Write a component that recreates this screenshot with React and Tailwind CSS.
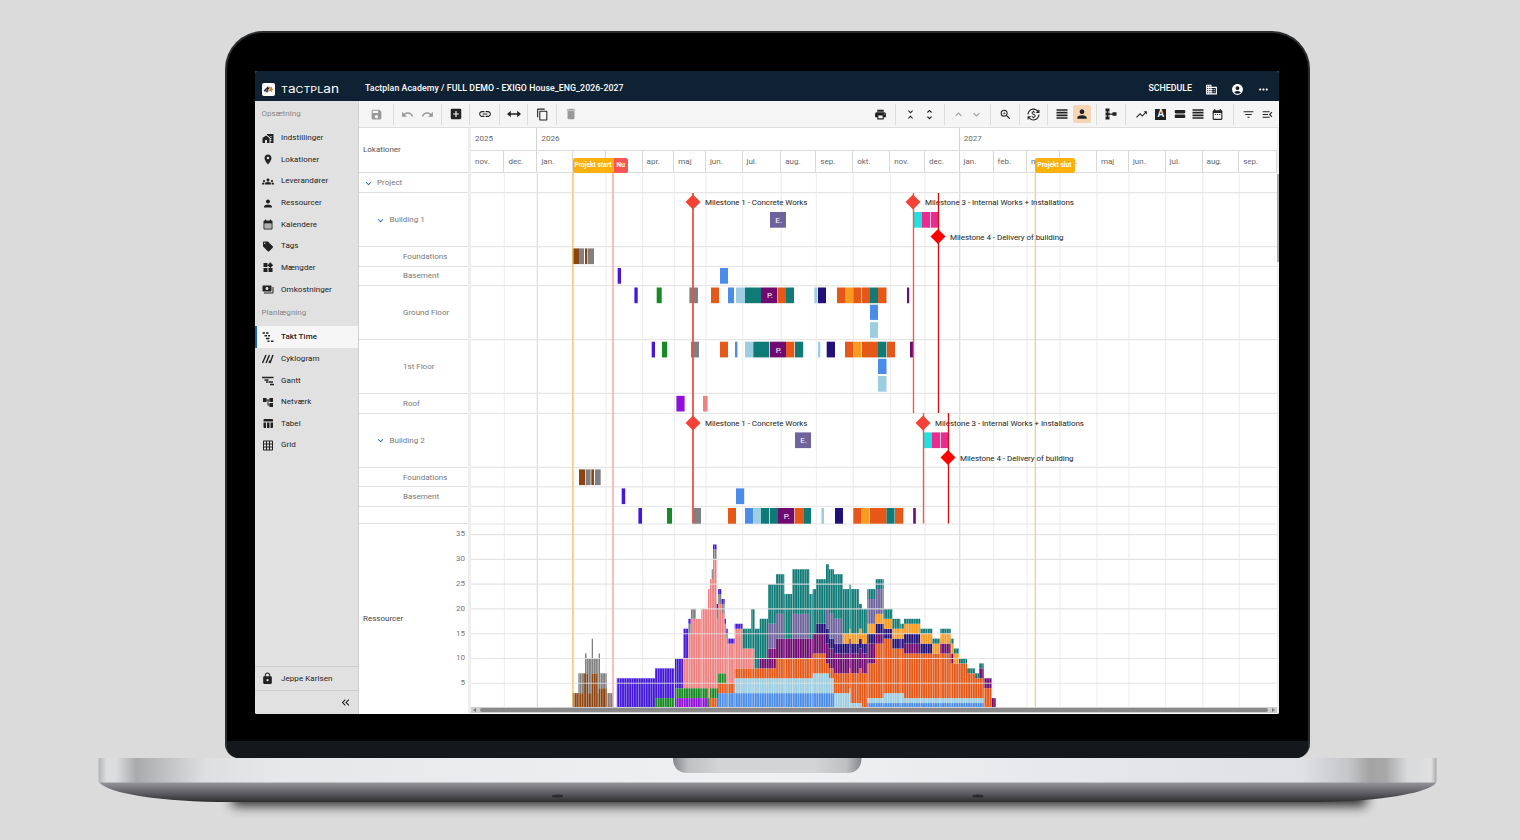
import React from 'react';
import {
  MdSave, MdUndo, MdRedo, MdAddBox, MdLink, MdContentCopy, MdDelete, MdPrint,
  MdUnfoldLess, MdUnfoldMore, MdKeyboardArrowUp, MdKeyboardArrowDown, MdZoomIn,
  MdCurrencyExchange, MdPerson, MdTrendingUp, MdViewStream, MdDateRange,
  MdFilterList, MdMenuOpen, MdHomeWork, MdLocationOn, MdGroups, MdCalendarMonth,
  MdLocalOffer, MdWidgets, MdPayments, MdAccountTree, MdTableChart, MdGridOn,
  MdLock, MdKeyboardDoubleArrowLeft, MdDomain, MdAccountCircle, MdMoreHoriz,
} from 'react-icons/md';

const C = {
  brown: '#8b4513',
  gray: '#808080',
  indigo: '#4318d8',
  green: '#178a25',
  violet: '#8f10dc',
  salmon: '#ee8080',
  blue: '#4a8ce8',
  light: '#9ccde0',
  orange: '#e55817',
  teal: '#107a76',
  purple: '#6e0a70',
  slate: '#6f639b',
  navy: '#201078',
  amber: '#f99a22',
  cyan: '#22dfe0',
  pink: '#e92d90',
};

// Custom icons
function Icon({ size = 12, children }) {
  return (
    <svg width={size} height={size} viewBox="0 0 24 24" fill="none" stroke="currentColor" strokeWidth="2.4">
      {children}
    </svg>
  );
}
const TaktIcon = () => <Icon><path d="M1 4h5M8 4h5M5 9.500h5M12 9.500h4M8 15h7M11 20.500h4M18 20.500h5" strokeWidth="2.800" /></Icon>;
const CyklogramIcon = () => <Icon><path d="M1 20L8 4M8 20l7-16M14 20l2-5M16 20l6-16" strokeWidth="2.800" /></Icon>;
const GanttIcon = () => <Icon><path d="M0 5h23M5 10h8M8 14h4M13 14h9M16 19h8" strokeWidth="2.600" /></Icon>;
const WidthIcon = () => (
  <Icon size={14}>
    <path d="M3 12h18" strokeWidth="2.400" />
    <path d="M6.500 6.500v11L0 12zM17.500 6.500v11L24 12z" fill="currentColor" stroke="none" />
  </Icon>
);
const RowsIcon = () => <Icon><path d="M1 4h22M1 9.300h22M1 14.700h22M1 20h22" strokeWidth="3.200" /></Icon>;
const TreeIcon = () => (
  <Icon>
    <path d="M5 4v16M5 12h14" strokeWidth="2.500" />
    <path d="M1 1h8v6H1zM1 9h8v6H1zM1 17h8v6H1zM15 8.500h8v7h-8z" fill="currentColor" stroke="none" />
  </Icon>
);
const LetterIcon = () => (
  <span className="flex size-[11px] items-center justify-center bg-[#222] text-[10px] leading-none font-medium text-white">A</span>
);

const setupItems = [
  { label: 'Indstillinger', icon: MdHomeWork },
  { label: 'Lokationer', icon: MdLocationOn },
  { label: 'Leverandører', icon: MdGroups },
  { label: 'Ressourcer', icon: MdPerson },
  { label: 'Kalendere', icon: MdCalendarMonth },
  { label: 'Tags', icon: MdLocalOffer },
  { label: 'Mængder', icon: MdWidgets },
  { label: 'Omkostninger', icon: MdPayments },
];

const planItems = [
  { label: 'Takt Time', icon: TaktIcon, active: true },
  { label: 'Cyklogram', icon: CyklogramIcon },
  { label: 'Gantt', icon: GanttIcon },
  { label: 'Netværk', icon: MdAccountTree },
  { label: 'Tabel', icon: MdTableChart },
  { label: 'Grid', icon: MdGridOn },
];

// Location rows with the y where each one ends
const rows = [
  { label: 'Project', level: 0, end: 192.7 },
  { label: 'Building 1', level: 1, end: 246.7 },
  { label: 'Foundations', level: 2, end: 266.3 },
  { label: 'Basement', level: 2, end: 285.7 },
  { label: 'Ground Floor', level: 2, end: 339.7 },
  { label: '1st Floor', level: 2, end: 393.4 },
  { label: 'Roof', level: 2, end: 413.4 },
  { label: 'Building 2', level: 1, end: 467.4 },
  { label: 'Foundations', level: 2, end: 486.8 },
  { label: 'Basement', level: 2, end: 506.3 },
  { label: '', level: 2, end: 524 },
];

const months = [
  ['nov.', 471], ['dec.', 504.4], ['jan.', 537.4], ['feb.', 572.7], ['mar.', 606], ['apr.', 642.6],
  ['maj', 674.3], ['jun.', 706], ['jul.', 742.6], ['aug.', 781.3], ['sep.', 816.4], ['okt.', 853.3],
  ['nov.', 890.3], ['dec.', 925], ['jan.', 959.7], ['feb.', 993.7], ['mar.', 1027], ['apr.', 1060],
  ['maj', 1097], ['jun.', 1129], ['jul.', 1165.7], ['aug.', 1202.7], ['sep.', 1239.3],
];

// [color, x1, x2, y, label]
const bars = [
  ['slate', 770, 786, 212, 'E.'],
  ['cyan', 914, 921.7, 212], ['pink', 921.7, 930, 212], ['pink', 930.7, 938.7, 212],
  ['brown', 572.7, 579.7, 248.4], ['gray', 579.7, 584, 248.4], ['brown', 585, 587.3, 248.4], ['gray', 587.9, 594, 248.4],
  ['indigo', 617.7, 621, 268], ['blue', 720, 728, 268],
  ['indigo', 634.4, 637.7, 287.5], ['green', 656.7, 661.7, 287.5], ['gray', 689.4, 698, 287.5],
  ['orange', 711, 719, 287.5], ['blue', 728, 734, 287.5], ['light', 736, 745, 287.5], ['teal', 745, 761, 287.5],
  ['purple', 761, 777.3, 287.5, 'P.'], ['orange', 777.8, 786, 287.5], ['teal', 786, 794, 287.5],
  ['light', 814.4, 817.4, 287.5], ['navy', 818, 826, 287.5], ['orange', 837, 845, 287.5], ['amber', 845, 853.3, 287.5],
  ['orange', 853.3, 861.3, 287.5], ['orange', 862, 870, 287.5], ['teal', 870, 878, 287.5], ['orange', 878, 886.5, 287.5],
  ['purple', 907, 909.2, 287.5], ['blue', 870, 878, 304.7], ['light', 870, 878, 322.2],
  ['indigo', 651.7, 655, 341.7], ['green', 662, 667.2, 341.7], ['gray', 691, 699, 341.7], ['orange', 720, 728, 341.7],
  ['blue', 735, 737.4, 341.7], ['light', 745, 753.3, 341.7], ['teal', 753.3, 769.3, 341.7], ['purple', 770, 786, 341.7, 'P.'],
  ['orange', 786, 794.3, 341.7], ['teal', 795, 803.2, 341.7], ['light', 818, 820.3, 341.7], ['navy', 826.7, 835, 341.7],
  ['orange', 845, 853.3, 341.7], ['amber', 853.3, 861.3, 341.7], ['orange', 862, 878, 341.7], ['teal', 878, 886.3, 341.7],
  ['orange', 886.8, 895, 341.7], ['purple', 910, 913, 341.7], ['blue', 878, 886.5, 358.8], ['light', 878, 886.5, 376],
  ['violet', 676.4, 684.6, 395.8], ['salmon', 703, 707.6, 395.8],
  ['slate', 795, 811, 432.4, 'E.'],
  ['cyan', 924, 932, 432.4], ['pink', 932, 940, 432.4], ['pink', 940.7, 948.4, 432.4],
  ['brown', 579, 585.3, 469.4], ['gray', 586, 590.6, 469.4], ['brown', 591.3, 594, 469.4], ['gray', 595, 600.7, 469.4],
  ['indigo', 621.7, 625.2, 488.4], ['blue', 736, 744.2, 488.4],
  ['indigo', 638.4, 642, 508], ['green', 667, 672, 508], ['gray', 692.8, 701, 508], ['orange', 728, 736, 508],
  ['blue', 745, 753.3, 508], ['light', 753.3, 761, 508], ['teal', 761, 769.3, 508], ['teal', 770, 778, 508],
  ['purple', 778, 794.2, 508, 'P.'], ['orange', 794.7, 803.3, 508], ['teal', 803.3, 811, 508], ['light', 821.4, 824, 508],
  ['navy', 835, 843, 508], ['orange', 853.3, 861, 508], ['amber', 861, 869.4, 508], ['orange', 870, 886.5, 508],
  ['teal', 886.5, 894.6, 508], ['orange', 895, 903.2, 508], ['purple', 913.2, 915.8, 508],
];

const milestones = [
  { x: 693, y: 202, color: '#f44336', label: 'Milestone 1 - Concrete Works', len: 102.5 },
  { x: 913, y: 202, color: '#f44336', label: 'Milestone 3 - Internal Works + Installations', len: 149 },
  { x: 938, y: 236.5, color: '#ff0000', label: 'Milestone 4 - Delivery of building', len: 113.5 },
  { x: 693, y: 423, color: '#f44336', label: 'Milestone 1 - Concrete Works', len: 102.5 },
  { x: 923, y: 423, color: '#f44336', label: 'Milestone 3 - Internal Works + Installations', len: 149 },
  { x: 948, y: 457.5, color: '#ff0000', label: 'Milestone 4 - Delivery of building', len: 113.5 },
];

// Resource stacks: [x1, x2, [color, cumulative top], ...]
const stacks = [
  [572.7, 578.3, ['brown', 3]],
  [578.3, 583.3, ['brown', 3], ['gray', 7]],
  [583.3, 585, ['brown', 7]],
  [585, 586.7, ['brown', 7], ['gray', 11]],
  [586.7, 588, ['brown', 7], ['gray', 10]],
  [588, 591.7, ['brown', 3], ['gray', 10]],
  [591.7, 593, ['brown', 7], ['gray', 14]],
  [593, 597.7, ['brown', 7], ['gray', 10]],
  [597.7, 598.7, ['brown', 3], ['gray', 10]],
  [598.7, 600, ['brown', 4], ['gray', 11]],
  [600, 606.7, ['brown', 4], ['gray', 7]],
  [607.3, 613, ['gray', 3]],
  [616.8, 655, ['indigo', 6]],
  [655, 674.3, ['green', 2], ['indigo', 8]],
  [675, 683.4, ['violet', 2], ['green', 4], ['indigo', 10]],
  [683.4, 688.3, ['violet', 2], ['green', 4], ['salmon', 10], ['indigo', 16]],
  [688.3, 691, ['violet', 2], ['green', 4], ['salmon', 15], ['gray', 17], ['indigo', 18]],
  [691, 696, ['violet', 2], ['green', 4], ['salmon', 18], ['gray', 20]],
  [696, 701.3, ['violet', 2], ['green', 4], ['salmon', 18]],
  [701.3, 708, ['violet', 2], ['green', 4], ['salmon', 20]],
  [708, 710, ['green', 2], ['salmon', 24]],
  [710, 711.7, ['orange', 2], ['green', 4], ['salmon', 26]],
  [711.7, 713, ['orange', 2], ['green', 4], ['salmon', 26], ['gray', 28]],
  [713, 716.6, ['orange', 2], ['green', 4], ['salmon', 30], ['gray', 32], ['indigo', 33]],
  [716.6, 718, ['orange', 2], ['green', 4], ['salmon', 18], ['gray', 20], ['indigo', 21]],
  [718, 721.3, ['blue', 3], ['orange', 5], ['green', 7], ['salmon', 21], ['gray', 23], ['indigo', 24]],
  [721.3, 724.7, ['blue', 3], ['orange', 5], ['green', 7], ['salmon', 19], ['gray', 21], ['indigo', 22]],
  [724.7, 726, ['blue', 3], ['orange', 5], ['green', 7], ['salmon', 17], ['indigo', 18]],
  [726, 727.7, ['blue', 3], ['orange', 5], ['salmon', 14], ['gray', 15], ['indigo', 16]],
  [727.7, 734.7, ['blue', 3], ['orange', 5], ['salmon', 13], ['indigo', 14]],
  [734.7, 742.7, ['blue', 3], ['light', 6], ['orange', 8], ['salmon', 16], ['indigo', 17]],
  [742.7, 751.3, ['blue', 3], ['light', 6], ['orange', 8], ['salmon', 12], ['teal', 16]],
  [751.3, 754.7, ['blue', 3], ['light', 6], ['orange', 8], ['salmon', 12], ['teal', 20]],
  [754.7, 759.7, ['blue', 3], ['light', 6], ['orange', 8], ['teal', 16]],
  [759.7, 768, ['blue', 3], ['light', 6], ['orange', 8], ['purple', 10], ['teal', 18]],
  [768, 776, ['blue', 3], ['light', 6], ['orange', 8], ['purple', 12], ['slate', 17], ['teal', 25]],
  [776, 784.3, ['blue', 3], ['light', 6], ['orange', 10], ['purple', 14], ['slate', 19], ['teal', 27]],
  [784.3, 792.3, ['blue', 3], ['light', 6], ['orange', 10], ['purple', 14], ['teal', 23]],
  [792.3, 809.3, ['blue', 3], ['light', 6], ['orange', 10], ['purple', 14], ['slate', 19], ['teal', 28]],
  [809.3, 812.7, ['blue', 3], ['light', 6], ['orange', 10], ['purple', 14], ['teal', 23]],
  [812.7, 816, ['blue', 3], ['light', 7], ['orange', 11], ['purple', 15], ['teal', 24]],
  [816, 826, ['blue', 3], ['light', 7], ['orange', 11], ['purple', 15], ['navy', 17], ['teal', 26]],
  [826, 829, ['blue', 3], ['light', 7], ['orange', 9], ['purple', 13], ['navy', 16], ['slate', 20], ['teal', 29]],
  [829, 834, ['blue', 3], ['light', 6], ['orange', 8], ['purple', 12], ['navy', 14], ['slate', 19], ['teal', 28]],
  [834, 842.7, ['light', 3], ['orange', 7], ['purple', 11], ['navy', 13], ['slate', 18], ['teal', 27]],
  [842.7, 849.3, ['light', 3], ['orange', 7], ['purple', 11], ['navy', 13], ['amber', 15], ['teal', 24]],
  [849.3, 850.7, ['light', 4], ['orange', 8], ['purple', 12], ['navy', 14], ['amber', 16], ['teal', 25]],
  [850.7, 859, ['light', 1], ['orange', 7], ['purple', 11], ['navy', 13], ['amber', 15], ['teal', 24]],
  [859, 862, ['light', 1], ['orange', 8], ['purple', 12], ['navy', 14], ['amber', 16], ['teal', 21]],
  [862, 867.3, ['orange', 7], ['purple', 11], ['navy', 13], ['amber', 15], ['teal', 20]],
  [867.3, 875.7, ['blue', 1], ['light', 2], ['orange', 9], ['purple', 13], ['navy', 15], ['amber', 17], ['slate', 22], ['teal', 24]],
  [875.7, 883.7, ['blue', 1], ['light', 2], ['orange', 13], ['purple', 15], ['navy', 17], ['amber', 19], ['slate', 24], ['teal', 26]],
  [883.7, 892.3, ['blue', 1], ['light', 3], ['orange', 14], ['navy', 16], ['amber', 18], ['teal', 20]],
  [892.3, 900.3, ['blue', 1], ['light', 3], ['orange', 12], ['navy', 14], ['amber', 16], ['teal', 18]],
  [900.3, 904, ['blue', 1], ['light', 3], ['orange', 12], ['navy', 14], ['amber', 16], ['teal', 17]],
  [904, 920.3, ['blue', 1], ['light', 2], ['orange', 11], ['purple', 13], ['navy', 15], ['amber', 17], ['teal', 18]],
  [920.3, 932.3, ['blue', 1], ['light', 2], ['orange', 11], ['navy', 13], ['amber', 15], ['teal', 16]],
  [932.3, 940.3, ['blue', 1], ['light', 2], ['orange', 11], ['amber', 13], ['teal', 14]],
  [940.3, 950.7, ['blue', 1], ['light', 2], ['orange', 11], ['purple', 13], ['amber', 15], ['teal', 16]],
  [950.7, 953.7, ['blue', 1], ['light', 2], ['orange', 9], ['purple', 11], ['amber', 13], ['teal', 14]],
  [953.7, 959, ['blue', 1], ['light', 2], ['orange', 9], ['amber', 11], ['teal', 12]],
  [959, 967, ['blue', 1], ['light', 2], ['orange', 9], ['teal', 10]],
  [967, 975, ['blue', 1], ['light', 2], ['orange', 7], ['teal', 8]],
  [975, 979, ['blue', 1], ['light', 2], ['orange', 6], ['teal', 7]],
  [979, 983.7, ['blue', 1], ['light', 2], ['orange', 6], ['purple', 8], ['teal', 9]],
  [983.7, 991.7, ['orange', 4], ['purple', 6]],
  [991.7, 995.7, ['purple', 2]],
];

const ticks = [35, 30, 25, 20, 15, 10, 5];
const yOf = (v) => 708 - v * 4.955;

function Toolbar() {
  return (
    <div className="flex h-[27px] shrink-0 items-center justify-between border-b border-[#dedede] bg-[#f6f5f6] text-[13px] text-[#222]">
      <div className="flex">
        <Group width="w-[35px]" muted><MdSave size={13} /></Group>
        <Group width="w-[48px]" muted><Slot><MdUndo size={13} /></Slot><Slot><MdRedo size={13} /></Slot></Group>
        <Group width="w-[28px]"><MdAddBox size={14} /></Group>
        <Group width="w-[30px]"><MdLink size={14} /></Group>
        <Group width="w-[28px]"><WidthIcon /></Group>
        <Group width="w-[29px]"><MdContentCopy size={13} /></Group>
        <Group width="w-[28px]" muted last><MdDelete size={14} /></Group>
      </div>
      <div className="flex">
        <Group width="w-[30px]"><MdPrint size={13} /></Group>
        <Group width="w-[49px]"><Slot><MdUnfoldLess /></Slot><Slot><MdUnfoldMore /></Slot></Group>
        <Group width="w-[46px]" muted><Slot small><MdKeyboardArrowUp /></Slot><Slot small><MdKeyboardArrowDown /></Slot></Group>
        <Group width="w-[29px]"><MdZoomIn size={13} /></Group>
        <Group width="w-[28px]"><MdCurrencyExchange size={13} /></Group>
        <Group width="w-[49px]">
          <Slot><RowsIcon /></Slot>
          <Slot><span className="flex size-[18px] shrink-0 items-center justify-center rounded-xs bg-[#f6d5b5]"><MdPerson size={14} /></span></Slot>
        </Group>
        <Group width="w-[29px]"><TreeIcon /></Group>
        <Group width="w-[108px]">
          <Slot><MdTrendingUp size={13} /></Slot>
          <Slot><LetterIcon /></Slot>
          <Slot small><MdViewStream size={14} /></Slot>
          <Slot><RowsIcon /></Slot>
          <Slot><MdDateRange size={13} /></Slot>
        </Group>
        <Group width="w-[45px] pl-[3px]" last><Slot><MdFilterList size={13} /></Slot><Slot><MdMenuOpen size={13} /></Slot></Group>
      </div>
    </div>
  );
}

function Group({ width, muted, last, children }) {
  return (
    <div className={`flex h-[21px] items-center justify-center ${width} ${muted ? 'text-[#999]' : ''} ${last ? '' : 'border-r border-[#dcdcdc]'}`}>
      {children}
    </div>
  );
}

function Slot({ small, children }) {
  return <div className={`flex shrink-0 items-center justify-center ${small ? 'w-[18px]' : 'w-[19.5px]'}`}>{children}</div>;
}

function NavItem({ item }) {
  const ItemIcon = item.icon;
  return (
    <div className={`flex h-[21.65px] items-center border-l-2 pl-[5px] ${item.active ? 'border-[#1565c0] bg-[#f6f6f6] font-medium' : 'border-transparent'}`}>
      <span className="flex w-[12px] justify-center"><ItemIcon size={13} /></span>
      <span className="ml-[7px]">{item.label}</span>
    </div>
  );
}

function Sidebar() {
  return (
    <div className="flex w-[104px] shrink-0 flex-col border-r border-[#cfcfcf] bg-[#e1e1e1] text-[8px] tracking-[0.06px] text-[#222]">
      <div className="flex h-[26.3px] items-center pl-[6.5px] text-[#888]">Opsætning</div>
      {setupItems.map((item) => <NavItem key={item.label} item={item} />)}
      <div className="flex h-[26px] items-center pl-[6.5px] text-[#888]">Planlægning</div>
      {planItems.map((item) => <NavItem key={item.label} item={item} />)}
      <div className="mt-auto flex h-[24px] items-center border-t border-[#cfcfcf] pl-[6px]">
        <MdLock size={13} />
        <span className="ml-[7px]">Jeppe Karlsen</span>
      </div>
      <div className="flex h-[24px] items-center justify-end border-t border-[#cfcfcf] pr-[6px]">
        <MdKeyboardDoubleArrowLeft size={13} />
      </div>
    </div>
  );
}

function LocationColumn() {
  return (
    <div className="flex w-[109px] shrink-0 flex-col bg-white text-[#777]">
      <div className="flex h-[45px] shrink-0 items-center border-b border-[#dcdcdc] pl-[4px] text-[#555]">Lokationer</div>
      {rows.map((row, i) => {
        const start = i === 0 ? 172.5 : rows[i - 1].end;
        return (
          <div
            key={i}
            className={`flex shrink-0 items-center border-b border-[#e0e0e0] pt-px ${['pl-[3.5px]', 'pl-[16px]', 'pl-[44px]'][row.level]}`}
            style={{ height: row.end - start }}
          >
            {row.level < 2 && <MdKeyboardArrowDown size={11} className="mr-[3.5px] text-[#1565c0]" />}
            {row.label}
          </div>
        );
      })}
      <div className="flex flex-1 items-center justify-between pl-[4px] text-[#444]">
        <span>Ressourcer</span>
        <div className="flex flex-col self-start pt-[5px] pr-[3px] text-right text-[#777]">
          {ticks.map((t) => <span key={t} className="h-[24.8px] leading-[10px]">{t}</span>)}
        </div>
      </div>
    </div>
  );
}

function TimelineHeader() {
  return (
    <div className="relative h-[45px] shrink-0 border-b border-[#dcdcdc] text-[#666]">
      <div className="flex h-[23px] items-center border-b border-[#dcdcdc]">
        <div className="flex h-full w-[66.4px] items-center border-r border-[#d4d4d4] pl-[4px]">2025</div>
        <div className="flex h-full w-[422.3px] items-center border-r border-[#d4d4d4] pl-[4px]">2026</div>
        <div className="pl-[4px]">2027</div>
      </div>
      <div className="flex h-[21px]">
        {months.map(([name, x], i) => (
          <div
            key={x}
            className="flex shrink-0 items-center border-r border-[#d8d8d8] pt-px pl-[4px]"
            style={{ width: (i < months.length - 1 ? months[i + 1][1] : 1276.7) - x }}
          >
            {name}
          </div>
        ))}
      </div>
      <div className="absolute top-[30px] left-[101.5px] flex h-[15px] text-[6.6px] font-bold tracking-normal text-white">
        <span className="flex w-[41px] items-center justify-center rounded-l-xs bg-[#fbb00c]">Projekt start</span>
        <span className="flex w-[14.5px] items-center justify-center rounded-r-xs bg-[#fa5555]">Nu</span>
      </div>
      <div className="absolute top-[30px] left-[563.5px] flex h-[15px] w-[40px] items-center justify-center rounded-xs bg-[#fbb00c] text-[6.6px] font-bold tracking-normal text-white">
        Projekt slut
      </div>
    </div>
  );
}

function Timeline() {
  return (
    <svg width="806" height="534" viewBox="471 173 806 534" className="block shrink-0" fontSize="8">
      <defs>
        <pattern id="days" x="572.5" y="0" width="2.37" height="10" patternUnits="userSpaceOnUse">
          <rect x="1.85" width="0.52" height="10" fill="#fff" opacity="0.65" />
        </pattern>
      </defs>

      {months.slice(1).map(([name, x]) => (
        <line key={x} x1={x} x2={x} y1="173" y2="707" stroke={name === 'jan.' ? '#dddddd' : '#f0f0f0'} strokeWidth="1.3" />
      ))}
      {rows.map((row) => (
        <line key={row.end} x1="471" x2="1277" y1={row.end} y2={row.end} stroke="#e6e6e6" strokeWidth="1.2" />
      ))}

      {/* Resource histogram */}
      {stacks.map(([x1, x2, ...parts]) => (
        <g key={x1}>
          {parts.map(([color, top], i) => {
            const base = i === 0 ? 0 : parts[i - 1][1];
            return <rect key={i} x={x1} y={yOf(top)} width={x2 - x1} height={(top - base) * 4.955} fill={C[color]} />;
          })}
          <rect x={x1} y={yOf(parts[parts.length - 1][1])} width={x2 - x1} height="170" fill="url(#days)" />
        </g>
      ))}
      {ticks.map((t) => (
        <line key={t} x1="471" x2="1277" y1={yOf(t)} y2={yOf(t)} stroke="#e0e0e0" strokeWidth="1.1" opacity="0.85" />
      ))}

      {/* Takt bars */}
      {bars.map(([color, x1, x2, y, label]) => (
        <g key={`${x1}-${y}`}>
          <rect x={x1} y={y} width={x2 - x1} height={y === 304.7 || y === 358.8 ? 15.2 : 15.7} fill={C[color]} />
          {label && <text x={(x1 + x2) / 2 + 0.7} y={y + 10.8} fill="#fff" textAnchor="middle">{label}</text>}
        </g>
      ))}

      {/* Project start, now and project end */}
      <line x1="573" x2="573" y1="173" y2="707" stroke="#f5bf45" strokeWidth="1.2" />
      <line x1="613" x2="613" y1="173" y2="707" stroke="#f59a9a" strokeWidth="1.3" />
      <line x1="1035.300" x2="1035.300" y1="173" y2="707" stroke="#f2cf75" strokeWidth="1.2" />

      {milestones.map((m) => (
        <text key={`t${m.x}-${m.y}`} x={m.x + 12} y={m.y + 3.4} textLength={m.len} fill="#222">{m.label}</text>
      ))}
      <g strokeWidth="1.4">
        <line x1="693" x2="693" y1="193" y2="523.500" stroke="#e8534a" strokeWidth="1.800" />
        <line x1="913.500" x2="913.500" y1="193" y2="413" stroke="#ee5a50" />
        <line x1="938.500" x2="938.500" y1="193" y2="413" stroke="#cc1414" />
        <line x1="923.500" x2="923.500" y1="413" y2="523.500" stroke="#ee5a50" />
        <line x1="948.500" x2="948.500" y1="413" y2="523.500" stroke="#cc1414" />
      </g>
      {milestones.map((m) => (
        <path key={`d${m.x}-${m.y}`} d={`M${m.x} ${m.y - 7.5}l7.500 7.500-7.500 7.500-7.500-7.500z`} fill={m.color} />
      ))}
    </svg>
  );
}

function Screen() {
  return (
    <div className="flex h-[643px] w-[1024px] flex-col overflow-hidden rounded-xs bg-white text-[8px]">
      <header className="flex h-[30px] shrink-0 items-center bg-[#0f2233] pt-[6px] pr-[9px] pl-[7px] text-white">
        <svg width="13" height="13" viewBox="0 0 26 26">
          <rect width="26" height="26" rx="4" fill="#fff" />
          <path d="M4 16l7-7-1 10M4 16h9M15 8l-3 5" stroke="#1d2b3a" strokeWidth="2.400" fill="none" />
          <path d="M14 7l3 2 3-2 0 4 3 2-3 2 0 4-3-3-4 1 2-4z" fill="#e8872a" />
        </svg>
        <svg width="60" height="13" viewBox="0 0 60 13" className="ml-[5px]" fill="#fff" fontFamily="Inter" fontSize="9">
          <text x="1" y="9.7" textLength="58" lengthAdjust="spacingAndGlyphs">
            T<tspan fontSize="11.500">a</tspan>CTPL<tspan fontSize="11.500">an</tspan>
          </text>
        </svg>
        <span className="ml-[25px] text-[8.75px] font-medium tracking-[0.08px]">Tactplan Academy / FULL DEMO - EXIGO House_ENG_2026-2027</span>
        <span className="ml-auto text-[8.8px] font-medium">SCHEDULE</span>
        <MdDomain size={13} className="ml-[13px]" />
        <MdAccountCircle size={13} className="ml-[13px]" />
        <MdMoreHoriz size={13} className="ml-[13px]" />
      </header>
      <div className="flex min-h-0 flex-1">
        <Sidebar />
        <div className="flex min-w-0 flex-1 flex-col">
          <Toolbar />
          <div className="flex min-h-0 flex-1">
            <LocationColumn />
            <div className="w-[3px] shrink-0 bg-[#eeeeee]" />
            <div className="flex w-[806px] shrink-0 flex-col">
              <TimelineHeader />
              <Timeline />
              <div className="flex h-[6px] items-center bg-[#cfcfcf] px-[2px]">
                <span className="size-0 border-y-2 border-r-3 border-y-transparent border-r-[#777]" />
                <span className="mx-[4px] h-[4px] flex-1 rounded-full bg-[#888]" />
                <span className="size-0 border-y-2 border-l-3 border-y-transparent border-l-[#777]" />
              </div>
            </div>
            <div className="w-[3px] shrink-0 bg-[#ededed] pt-[46px]">
              <div className="h-[88px] bg-[#aaa]" />
            </div>
          </div>
        </div>
      </div>
    </div>
  );
}

function LaptopBase() {
  return (
    <svg width="1520" height="82" viewBox="0 758 1520 82" className="block">
      <defs>
        <linearGradient id="deck">
          <stop offset="0" stopColor="#b4b5b8" />
          <stop offset="0.006" stopColor="#dcdddf" />
          <stop offset="0.013" stopColor="#dcdddf" />
          <stop offset="0.028" stopColor="#a9aaac" />
          <stop offset="0.046" stopColor="#bcbdbf" />
          <stop offset="0.08" stopColor="#dedfe1" />
          <stop offset="0.13" stopColor="#e6e7e9" />
          <stop offset="0.5" stopColor="#eff1f2" />
          <stop offset="0.9" stopColor="#dfe0e4" />
          <stop offset="0.935" stopColor="#c4c5c7" />
          <stop offset="0.95" stopColor="#a4a4a5" />
          <stop offset="0.962" stopColor="#a8a8a9" />
          <stop offset="0.978" stopColor="#d8d9da" />
          <stop offset="0.996" stopColor="#e0e0e1" />
          <stop offset="1" stopColor="#a8a8aa" />
        </linearGradient>
        <linearGradient id="under" x2="0" y2="1">
          <stop offset="0" stopColor="#97989c" />
          <stop offset="0.5" stopColor="#636369" />
          <stop offset="1" stopColor="#2d2d30" />
        </linearGradient>
        <linearGradient id="notch">
          <stop offset="0" stopColor="#85868a" />
          <stop offset="0.08" stopColor="#bfc0c2" />
          <stop offset="0.25" stopColor="#d3d4d6" />
          <stop offset="0.75" stopColor="#d3d4d6" />
          <stop offset="0.92" stopColor="#bfc0c2" />
          <stop offset="1" stopColor="#85868a" />
        </linearGradient>
        <filter id="soft" x="-5%" y="-200%" width="110%" height="500%">
          <feGaussianBlur stdDeviation="6" />
        </filter>
      </defs>
      <rect x="232" y="788" width="1134" height="18" fill="#000" opacity="0.8" filter="url(#soft)" />
      <path d="M99 782h1337c0 5-22 14-72 18-18 1.500-38 2-62 2H230c-68 0-122-8-131-20z" fill="url(#under)" />
      <rect x="98.500" y="758" width="1338" height="24.500" rx="1" fill="url(#deck)" />
      <path d="M673 758h188.500c0 9-5 15-14 15H687c-9 0-14-6-14-15z" fill="url(#notch)" />
      <ellipse cx="557.500" cy="796" rx="5.500" ry="1.500" fill="#2a2a2d" />
      <ellipse cx="978" cy="796" rx="5.500" ry="1.500" fill="#2a2a2d" />
    </svg>
  );
}

function App() {
  return (
    <div className="flex h-[840px] w-[1520px] flex-col overflow-hidden bg-[#dbdbdb] pt-[31px] font-['Roboto',sans-serif]">
      <div className="ml-[225px] flex h-[727px] w-[1085px] flex-col overflow-hidden rounded-t-[38px] rounded-b-[14px] border-2 border-b-0 border-[#2b2e30] bg-black">
        <div className="pt-[38px] pl-[28px]">
          <Screen />
        </div>
        <div className="mt-auto h-[17px] bg-[#14181a]" />
      </div>
      <LaptopBase />
    </div>
  );
}

export default App;
